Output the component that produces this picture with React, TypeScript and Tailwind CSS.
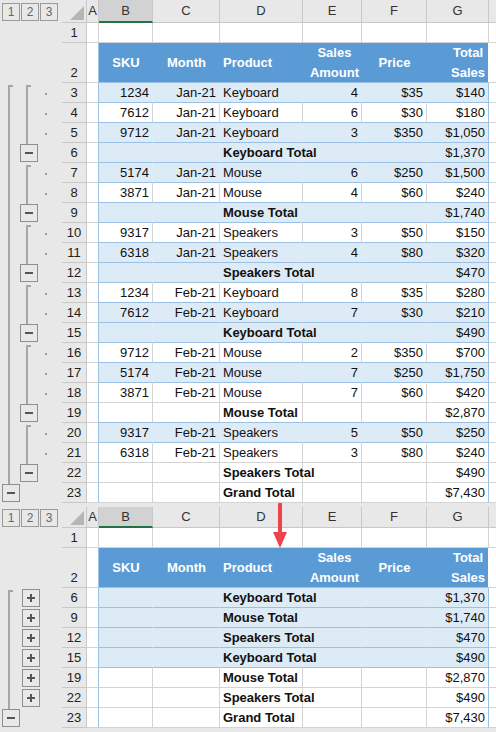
import React from "react";

type Row = {
  n: number;
  h: number;
  kind: "blank" | "header" | "data" | "total";
  blue?: boolean;
  c?: string[];
};

const W = [54, 67, 83, 59, 65, 62];
const BLUEB = "#9bc2e6";
const GRID = "#d4d4d4";

function data(n: number, blue: boolean, c: string[]): Row {
  return { n, h: 20, kind: "data", blue, c };
}
function total(n: number, blue: boolean, label: string, v: string): Row {
  return { n, h: 20, kind: "total", blue, c: ["", "", label, "", "", v] };
}

const top: Row[] = [
  { n: 1, h: 20, kind: "blank" },
  { n: 2, h: 40, kind: "header" },
  data(3, true, ["1234", "Jan-21", "Keyboard", "4", "$35", "$140"]),
  data(4, false, ["7612", "Jan-21", "Keyboard", "6", "$30", "$180"]),
  data(5, true, ["9712", "Jan-21", "Keyboard", "3", "$350", "$1,050"]),
  total(6, true, "Keyboard Total", "$1,370"),
  data(7, true, ["5174", "Jan-21", "Mouse", "6", "$250", "$1,500"]),
  data(8, false, ["3871", "Jan-21", "Mouse", "4", "$60", "$240"]),
  total(9, true, "Mouse Total", "$1,740"),
  data(10, false, ["9317", "Jan-21", "Speakers", "3", "$50", "$150"]),
  data(11, true, ["6318", "Jan-21", "Speakers", "4", "$80", "$320"]),
  total(12, true, "Speakers Total", "$470"),
  data(13, false, ["1234", "Feb-21", "Keyboard", "8", "$35", "$280"]),
  data(14, true, ["7612", "Feb-21", "Keyboard", "7", "$30", "$210"]),
  total(15, true, "Keyboard Total", "$490"),
  data(16, false, ["9712", "Feb-21", "Mouse", "2", "$350", "$700"]),
  data(17, true, ["5174", "Feb-21", "Mouse", "7", "$250", "$1,750"]),
  data(18, false, ["3871", "Feb-21", "Mouse", "7", "$60", "$420"]),
  total(19, false, "Mouse Total", "$2,870"),
  data(20, true, ["9317", "Feb-21", "Speakers", "5", "$50", "$250"]),
  data(21, false, ["6318", "Feb-21", "Speakers", "3", "$80", "$240"]),
  total(22, false, "Speakers Total", "$490"),
  total(23, false, "Grand Total", "$7,430"),
];

const bottom: Row[] = [
  { n: 1, h: 20, kind: "blank" },
  { n: 2, h: 40, kind: "header" },
  total(6, true, "Keyboard Total", "$1,370"),
  total(9, true, "Mouse Total", "$1,740"),
  total(12, true, "Speakers Total", "$470"),
  total(15, true, "Keyboard Total", "$490"),
  total(19, false, "Mouse Total", "$2,870"),
  total(22, false, "Speakers Total", "$490"),
  total(23, false, "Grand Total", "$7,430"),
];

const LINE = "#a6a6a6";
const BTN = "#8f8f8f";

function Btn({ x, y, plus }: { x: number; y: number; plus?: boolean }) {
  return (
    <g>
      <rect x={x + 0.5} y={y + 0.5} width={17} height={17} fill="#e8e8e8" stroke={BTN} />
      <rect x={x + 5} y={y + 8} width={8} height={2} fill="#555" />
      {plus && <rect x={x + 8} y={y + 5} width={2} height={8} fill="#555" />}
    </g>
  );
}

function TopGutter() {
  const groups = [
    [0, 3],
    [4, 6],
    [7, 9],
    [10, 12],
    [13, 16],
    [17, 19],
  ];
  const dots = [0, 1, 2, 4, 5, 7, 8, 10, 11, 13, 14, 15, 17, 18];
  return (
    <svg width={62} height={420} className="block">
      <rect x={8} y={2} width={2} height={399} fill={LINE} />
      <rect x={8} y={2} width={5} height={2} fill={LINE} />
      <Btn x={2} y={401} />
      {groups.map(([s, t]) => (
        <g key={s}>
          <rect x={26} y={s * 20 + 2} width={2} height={t * 20 + 1 - (s * 20 + 2)} fill={LINE} />
          <rect x={26} y={s * 20 + 2} width={5} height={2} fill={LINE} />
          <Btn x={20} y={t * 20 + 1} />
        </g>
      ))}
      {dots.map((d) => (
        <rect key={d} x={45} y={d * 20 + 10} width={2} height={2} fill="#999" />
      ))}
    </svg>
  );
}

function BottomGutter() {
  return (
    <svg width={62} height={140} className="block">
      <rect x={8} y={2} width={2} height={119} fill={LINE} />
      <rect x={8} y={2} width={5} height={2} fill={LINE} />
      <Btn x={2} y={121} />
      {[0, 1, 2, 3, 4, 5].map((i) => (
        <Btn key={i} x={22} y={i * 20 + 1} plus />
      ))}
    </svg>
  );
}

function ColHeader({ h }: { h: number }) {
  const letters = ["B", "C", "D", "E", "F", "G"];
  return (
    <div className="flex bg-[#e8e8e8]" style={{ height: h }}>
      <div className="w-[62px] flex items-center pl-[2px]">
        {["1", "2", "3"].map((t) => (
          <div
            key={t}
            className="w-[18px] h-[18px] mr-[1px] border border-[#9a9a9a] flex items-center justify-center text-[12px] text-[#666]"
          >
            {t}
          </div>
        ))}
      </div>
      <div className="w-[25px] relative border-r border-b border-[#c8c8c8]">
        <svg width={14} height={14} className="absolute right-[2px] bottom-[2px]">
          <polygon points="14,0 14,14 0,14" fill="#b5b5b5" />
        </svg>
      </div>
      <div className="w-[12px] flex items-center justify-center border-r border-b border-[#c8c8c8] text-[13px] text-[#333]">
        A
      </div>
      {letters.map((l, i) => (
        <div
          key={l}
          className={
            "flex items-center justify-center border-r text-[13px] text-[#333] " +
            (i === 0 ? "bg-[#d2d2d2] border-b-2 border-b-[#217346] border-r-[#c8c8c8]" : "border-b border-[#c8c8c8]")
          }
          style={{ width: W[i] }}
        >
          {l}
        </div>
      ))}
      <div className="flex-1 border-b border-[#c8c8c8]" />
    </div>
  );
}

function Sheet({ rows, gutter, hh }: { rows: Row[]; gutter: React.ReactNode; hh: number }) {
  return (
    <div>
      <ColHeader h={hh} />
      <div className="flex">
        <div className="w-[62px] bg-[#e8e8e8] flex flex-col">
          <div className="h-[60px]" />
          {gutter}
        </div>
        <div className="flex-1">
          {rows.map((r, idx) => {
            const next = rows[idx + 1];
            const inTable = r.kind !== "blank";
            const bottomBlue = r.kind === "header" || r.blue || (next && next.blue);
            const bColor = bottomBlue ? BLUEB : GRID;
            return (
              <div key={r.n} className="flex" style={{ height: r.h }}>
                <div
                  className="w-[25px] bg-[#e8e8e8] border-r border-b border-[#c8c8c8] flex items-end justify-center text-[13px] leading-[18px] text-[#222]"
                >
                  {r.n}
                </div>
                <div className="w-[12px] bg-white" style={{ borderRight: `1px solid ${inTable ? BLUEB : GRID}`, borderBottom: `1px solid ${GRID}` }} />
                {r.kind === "blank" &&
                  W.map((w, i) => (
                    <div key={i} className="bg-white" style={{ width: w, borderRight: `1px solid ${GRID}`, borderBottom: `1px solid ${GRID}` }} />
                  ))}
                {r.kind === "header" && (
                  <div className="flex bg-[#5b9bd5] text-white font-bold text-[13px] leading-[20px]" style={{ borderBottom: `1px solid ${BLUEB}` }}>
                    <div className="flex items-center justify-center" style={{ width: W[0] }}>SKU</div>
                    <div className="flex items-center justify-center" style={{ width: W[1] }}>Month</div>
                    <div className="flex items-center pl-[3px]" style={{ width: W[2] }}>Product</div>
                    <div className="flex items-center justify-end pr-[3px] text-center" style={{ width: W[3] }}>
                      <span>Sales<br />Amount</span>
                    </div>
                    <div className="flex items-center justify-center" style={{ width: W[4] }}>Price</div>
                    <div className="flex items-center justify-end pr-[3px] text-center" style={{ width: W[5] - 1 }}>
                      <span>Total<br />Sales</span>
                    </div>
                  </div>
                )}
                {(r.kind === "data" || r.kind === "total") &&
                  r.c!.map((t, i) => {
                    const last = i === 5;
                    const rc = last ? BLUEB : r.blue ? "transparent" : GRID;
                    const left = i === 2;
                    const bold = r.kind === "total" && i === 2;
                    return (
                      <div
                        key={i}
                        className={
                          "flex items-end text-[13px] leading-[18px] text-[#111] whitespace-nowrap " +
                          (left ? "justify-start pl-[3px] " : "justify-end pr-[3px] ") +
                          (bold ? "font-bold relative z-10 " : "") +
                          (r.blue ? "bg-[#ddebf7]" : "bg-white")
                        }
                        style={{ width: W[i], borderRight: `1px solid ${rc}`, borderBottom: `1px solid ${bColor}` }}
                      >
                        <span className={bold ? "overflow-visible" : ""}>{t}</span>
                      </div>
                    );
                  })}
                <div className="flex-1 bg-white" style={{ borderBottom: `1px solid ${GRID}` }} />
              </div>
            );
          })}
        </div>
      </div>
    </div>
  );
}

export default function App() {
  return (
    <div
      className="relative w-[496px] h-[732px] bg-[#e8e8e8] overflow-hidden"
      style={{ fontFamily: '"Liberation Sans", Arial, sans-serif' }}
    >
      <Sheet rows={top} gutter={<TopGutter />} hh={23} />
      <div className="h-[4px] bg-[#e8e8e8]" />
      <Sheet rows={bottom} gutter={<BottomGutter />} hh={21} />
      <svg width={14} height={48} className="absolute left-[273px] top-[502px]">
        <rect x={5} y={0} width={4} height={32} rx={2} fill="#f0414f" />
        <polygon points="0,30 14,30 7,46" fill="#f0414f" />
      </svg>
    </div>
  );
}
